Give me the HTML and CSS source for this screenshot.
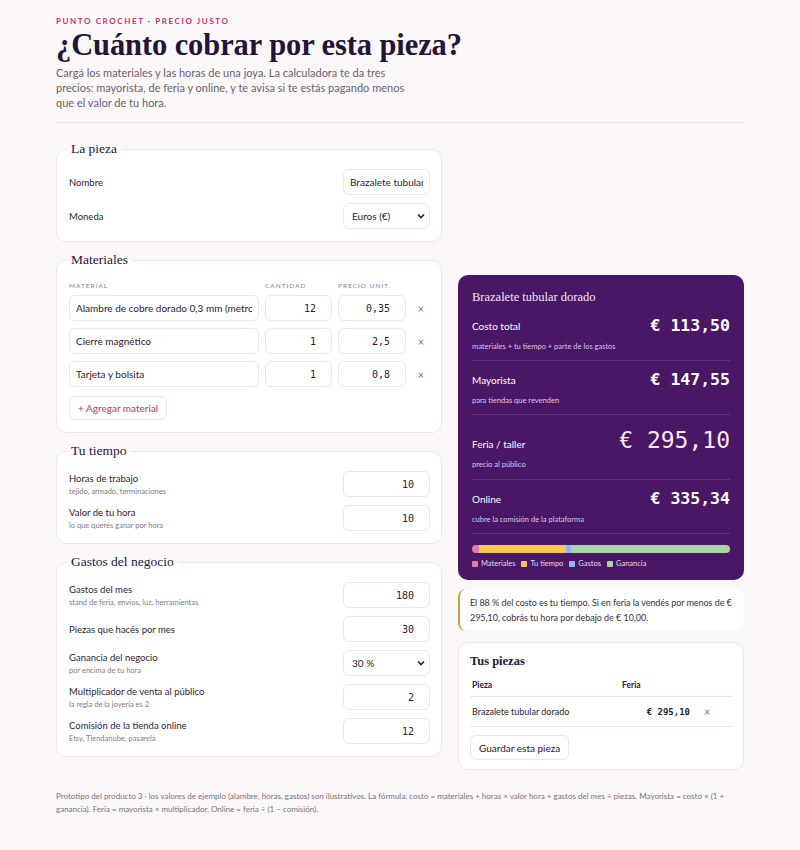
FILE: index.html
```html
<!DOCTYPE html>
<html lang="es">
<head>
<meta charset="utf-8">
<title>Punto Crochet · Precio justo</title>
<link rel="stylesheet" href="styles.css">
</head>
<body>
<div class="page">
  <header class="head">
    <div class="kicker">PUNTO CROCHET · PRECIO JUSTO</div>
    <h1 class="title">¿Cuánto cobrar por esta pieza?</h1>
    <p class="lede">Cargá los materiales y las horas de una joya. La calculadora te da tres precios: mayorista, de feria y online, y te avisa si te estás pagando menos que el valor de tu hora.</p>
  </header>

  <div class="layout">
    <div class="col-left">
      <fieldset class="card">
        <legend>La pieza</legend>
        <div class="row">
          <span class="lbl">Nombre</span>
          <input class="inp txt" type="text" value="Brazalete tubular dorado">
        </div>
        <div class="row">
          <span class="lbl">Moneda</span>
          <span class="selwrap">
            <select class="inp sel"><option>Euros (€)</option></select>
            <svg class="chev" width="8" height="6" viewBox="0 0 8 6"><path d="M1 1.5 L4 4.5 L7 1.5" fill="none" stroke="#222" stroke-width="1.6"/></svg>
          </span>
        </div>
      </fieldset>

      <fieldset class="card">
        <legend>Materiales</legend>
        <div class="mgrid">
          <span class="mh">MATERIAL</span>
          <span class="mh">CANTIDAD</span>
          <span class="mh">PRECIO UNIT.</span>
          <span></span>

          <input class="inp txt mtxt" type="text" value="Alambre de cobre dorado 0,3 mm (metro)">
          <input class="inp num" type="text" value="12">
          <input class="inp num" type="text" value="0,35">
          <span class="x">×</span>

          <input class="inp txt mtxt" type="text" value="Cierre magnético">
          <input class="inp num" type="text" value="1">
          <input class="inp num" type="text" value="2,5">
          <span class="x">×</span>

          <input class="inp txt mtxt" type="text" value="Tarjeta y bolsita">
          <input class="inp num" type="text" value="1">
          <input class="inp num" type="text" value="0,8">
          <span class="x">×</span>
        </div>
        <button class="btn add">+ Agregar material</button>
      </fieldset>

      <fieldset class="card">
        <legend>Tu tiempo</legend>
        <div class="row">
          <span class="lblstack"><span class="lbl">Horas de trabajo</span><span class="sub">tejido, armado, terminaciones</span></span>
          <input class="inp num wide" type="text" value="10">
        </div>
        <div class="row">
          <span class="lblstack"><span class="lbl">Valor de tu hora</span><span class="sub">lo que querés ganar por hora</span></span>
          <input class="inp num wide" type="text" value="10">
        </div>
      </fieldset>

      <fieldset class="card">
        <legend>Gastos del negocio</legend>
        <div class="row">
          <span class="lblstack"><span class="lbl">Gastos del mes</span><span class="sub">stand de feria, envíos, luz, herramientas</span></span>
          <input class="inp num wide" type="text" value="180">
        </div>
        <div class="row">
          <span class="lblstack"><span class="lbl">Piezas que hacés por mes</span></span>
          <input class="inp num wide" type="text" value="30">
        </div>
        <div class="row">
          <span class="lblstack"><span class="lbl">Ganancia del negocio</span><span class="sub">por encima de tu hora</span></span>
          <span class="selwrap">
            <select class="inp sel"><option>30 %</option></select>
            <svg class="chev" width="8" height="6" viewBox="0 0 8 6"><path d="M1 1.5 L4 4.5 L7 1.5" fill="none" stroke="#222" stroke-width="1.6"/></svg>
          </span>
        </div>
        <div class="row">
          <span class="lblstack"><span class="lbl">Multiplicador de venta al público</span><span class="sub">la regla de la joyería es 2</span></span>
          <input class="inp num wide" type="text" value="2">
        </div>
        <div class="row">
          <span class="lblstack"><span class="lbl">Comisión de la tienda online</span><span class="sub">Etsy, Tiendanube, pasarela</span></span>
          <input class="inp num wide" type="text" value="12">
        </div>
      </fieldset>
    </div>

    <div class="col-right">
      <section class="result">
        <h2 class="rtitle">Brazalete tubular dorado</h2>
        <div class="rrow">
          <div class="rline"><span class="rlbl">Costo total</span><span class="rval">€ 113,50</span></div>
          <div class="rsub">materiales + tu tiempo + parte de los gastos</div>
        </div>
        <div class="rrow">
          <div class="rline"><span class="rlbl">Mayorista</span><span class="rval">€ 147,55</span></div>
          <div class="rsub">para tiendas que revenden</div>
        </div>
        <div class="rrow big">
          <div class="rline"><span class="rlbl">Feria / taller</span><span class="rval">€ 295,10</span></div>
          <div class="rsub">precio al público</div>
        </div>
        <div class="rrow">
          <div class="rline"><span class="rlbl">Online</span><span class="rval">€ 335,34</span></div>
          <div class="rsub">cubre la comisión de la plataforma</div>
        </div>
        <div class="bar">
          <span class="seg s-mat" style="width:2.54%"></span>
          <span class="seg s-tie" style="width:33.89%"></span>
          <span class="seg s-gas" style="width:2.03%"></span>
          <span class="seg s-gan" style="width:61.54%"></span>
        </div>
        <div class="legend">
          <span class="li"><i class="sw s-mat"></i>Materiales</span>
          <span class="li"><i class="sw s-tie"></i>Tu tiempo</span>
          <span class="li"><i class="sw s-gas"></i>Gastos</span>
          <span class="li"><i class="sw s-gan"></i>Ganancia</span>
        </div>
      </section>

      <div class="note">El 88 % del costo es tu tiempo. Si en feria la vendés por menos de € 295,10, cobrás tu hora por debajo de € 10,00.</div>

      <section class="saved">
        <h3 class="stitle">Tus piezas</h3>
        <table class="stable">
          <thead><tr><th class="c1">Pieza</th><th class="c2">Feria</th><th class="c3"></th></tr></thead>
          <tbody><tr><td class="c1">Brazalete tubular dorado</td><td class="c2 mono">€ 295,10</td><td class="c3"><span class="x">×</span></td></tr></tbody>
        </table>
        <button class="btn save">Guardar esta pieza</button>
      </section>
    </div>
  </div>

  <footer class="foot">Prototipo del producto 3 · los valores de ejemplo (alambre, horas, gastos) son ilustrativos. La fórmula: costo = materiales + horas × valor hora + gastos del mes ÷ piezas. Mayorista = costo × (1 + ganancia). Feria = mayorista × multiplicador. Online = feria ÷ (1 − comisión).</footer>
</div>
</body>
</html>
```
FILE: styles.css
```css
* { box-sizing: border-box; }
html, body { margin: 0; padding: 0; }
body {
  background: #fcf8fa;
  color: #2a2233;
  font-family: "Lato", "Noto Sans", sans-serif;
}
.page {
  width: 688px;
  margin: 0 auto;
  padding: 16px 0 30px;
}
.head {
  border-bottom: 1px solid #ece3e8;
  padding-bottom: 12px;
}
.kicker {
  font-size: 8px;
  font-weight: 700;
  letter-spacing: 1.6px;
  color: #c2336e;
  line-height: 10px;
}
.title {
  margin: 1px 0 2px;
  font-family: "Liberation Serif", serif;
  font-weight: 700;
  font-size: 30.5px;
  line-height: 36px;
  color: #241538;
  letter-spacing: -0.1px;
}
.lede {
  margin: 0;
  max-width: 350px;
  font-size: 11px;
  line-height: 15px;
  color: #6b606b;
}
.layout {
  display: grid;
  grid-template-columns: 386px 286px;
  gap: 16px;
  margin-top: 18px;
  align-items: start;
}
.col-left { display: flex; flex-direction: column; gap: 10px; }
.col-right { display: flex; flex-direction: column; gap: 9px; margin-top: 134px; }

.card {
  margin: 0;
  background: #fff;
  border: 1px solid #efe5eb;
  border-radius: 10px;
  padding: 4px 11px 12px 12px;
  min-width: 0;
}
.card legend {
  font-family: "Liberation Serif", serif;
  font-size: 13.5px;
  color: #241538;
  padding: 0 4px;
  margin-left: -2px;
}
.row {
  display: flex;
  align-items: center;
  justify-content: space-between;
  min-height: 26px;
  margin-top: 8px;
}
.row:first-of-type { margin-top: 8px; }
.lbl { font-size: 9.5px; color: #2e2636; }
.lblstack { display: flex; flex-direction: column; gap: 3px; }
.sub { font-size: 7.5px; color: #857a85; }

.inp {
  height: 26px;
  border: 1px solid #efe5eb;
  border-radius: 6px;
  background: #fff;
  color: #2a2233;
  font-family: "Lato", "Noto Sans", sans-serif;
  font-size: 10px;
  outline: none;
}
.txt { width: 87px; padding: 0 6px; }
.num {
  font-family: "DejaVu Sans Mono", monospace;
  font-size: 10px;
  text-align: right;
  padding: 0 15px 0 6px;
  width: 100%;
}
.num.wide { width: 87px; }
.selwrap { position: relative; display: inline-block; }
.sel {
  width: 87px;
  appearance: none;
  -webkit-appearance: none;
  padding: 0 8px;
  display: block;
}
.chev { position: absolute; right: 5px; top: 10px; pointer-events: none; }

.mgrid {
  display: grid;
  grid-template-columns: 190px 67px 68px 1fr;
  column-gap: 6px;
  row-gap: 7px;
  align-items: center;
  margin-top: 10px;
}
.mgrid .mh {
  font-size: 6.5px;
  letter-spacing: 1px;
  color: #8a7f8a;
  margin-bottom: -1px;
}
.mtxt { width: 100%; padding: 0 6px; font-size: 10px; }
.x { font-size: 11px; color: #7c7280; text-align: center; }
.btn {
  font-family: "Lato", "Noto Sans", sans-serif;
  background: #fff;
  border: 1px solid #efe5eb;
  border-radius: 6px;
  cursor: pointer;
}
.add {
  margin-top: 9px;
  height: 24px;
  padding: 0 8px;
  color: #c2336e;
  font-size: 10px;
}

.result {
  background: #4a1766;
  border-radius: 10px;
  padding: 14px 14px 12px;
  color: #fff;
}
.rtitle {
  margin: 0 0 2px;
  font-family: "Liberation Serif", serif;
  font-weight: 400;
  font-size: 12.5px;
  line-height: 16px;
  color: #f1e3f2;
}
.rrow {
  padding: 8px 0 9px;
  border-bottom: 1px solid rgba(255, 255, 255, 0.12);
}
.rline { display: flex; justify-content: space-between; align-items: center; }
.rlbl { font-size: 10px; color: #fff; }
.rval {
  font-family: "DejaVu Sans Mono", monospace;
  font-weight: 700;
  font-size: 16.5px;
  line-height: 22px;
  color: #fff;
}
.rsub { font-size: 7.5px; line-height: 9px; color: #dcc6e4; margin-top: 5px; }
.big { padding: 10px 0 10px; }
.big .rline { align-items: baseline; }
.big .rval { font-size: 23px; line-height: 30px; font-weight: 400; color: #fbe8f6; }
.bar {
  display: flex;
  height: 8px;
  border-radius: 4px;
  overflow: hidden;
  margin-top: 11px;
}
.seg { display: block; height: 100%; }
.s-mat { background: #e07ba6; }
.s-tie { background: #f6c94c; }
.s-gas { background: #8fbcf0; }
.s-gan { background: #a8d6a4; }
.legend { display: flex; gap: 6px; margin-top: 6px; font-size: 7.5px; line-height: 9px; color: #e8d8ee; }
.li { display: inline-flex; align-items: center; gap: 3px; }
.sw { display: inline-block; width: 6px; height: 6px; border-radius: 1px; }

.note {
  background: #fff;
  border-left: 2px solid #c9a04a;
  border-radius: 8px;
  padding: 6px 4px 6px 10px;
  font-size: 9px;
  letter-spacing: -0.05px;
  line-height: 15px;
  color: #3a3140;
}

.saved {
  background: #fff;
  border: 1px solid #efe5eb;
  border-radius: 10px;
  padding: 11px 11px 9px;
  margin-top: 2px;
}
.stitle {
  margin: 0 0 6px;
  font-family: "Liberation Serif", serif;
  font-size: 12.5px;
  color: #241538;
}
.stable { width: 100%; border-collapse: collapse; font-size: 9px; }
.stable th {
  text-align: left;
  font-weight: 700;
  font-size: 8.5px;
  padding: 5px 2px 6px;
  border-bottom: 1px solid #efe5eb;
  color: #2a2233;
}
.stable td {
  padding: 8px 2px 8px;
  border-bottom: 1px solid #efe5eb;
  font-size: 9px;
  color: #2a2233;
}
.stable .c1 { width: 150px; }
.stable td.c2 { text-align: right; padding-right: 12px; }
.stable .c3 { width: 30px; text-align: left; }
.mono { font-family: "DejaVu Sans Mono", monospace; font-weight: 700; font-size: 9px; }
.save {
  margin-top: 8px;
  height: 25px;
  padding: 0 8px;
  font-size: 10px;
  color: #2a2233;
}

.foot {
  margin-top: 20px;
  font-size: 8px;
  line-height: 13px;
  color: #7a6f7a;
}
```
